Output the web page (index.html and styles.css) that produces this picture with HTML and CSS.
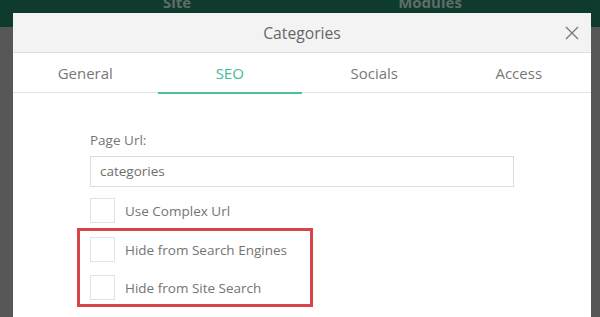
FILE: index.html
```html
<!DOCTYPE html>
<html lang="en">
<head>
<meta charset="utf-8">
<title>Categories</title>
<link rel="stylesheet" href="styles.css">
</head>
<body>
<div class="topbar">
  <nav class="nav">
    <span class="nav-item">Site</span>
    <span class="nav-item">Modules</span>
  </nav>
</div>
<div class="modal">
  <div class="modal-header">
    <span class="modal-title">Categories</span>
    <button class="close" aria-label="Close">
      <svg width="14" height="14" viewBox="0 0 14 14"><path d="M1 1L13 13M13 1L1 13" stroke="#7a7a7a" stroke-width="1.4" fill="none"/></svg>
    </button>
  </div>
  <div class="tabs">
    <div class="tab">General</div>
    <div class="tab active">SEO</div>
    <div class="tab">Socials</div>
    <div class="tab">Access</div>
  </div>
  <div class="modal-body">
    <label class="field-label">Page Url:</label>
    <div class="input">categories</div>
    <div class="check-row first">
      <span class="checkbox"></span>
      <span class="check-label">Use Complex Url</span>
    </div>
    <div class="highlight">
      <div class="check-row">
        <span class="checkbox"></span>
        <span class="check-label">Hide from Search Engines</span>
      </div>
      <div class="check-row second">
        <span class="checkbox"></span>
        <span class="check-label">Hide from Site Search</span>
      </div>
    </div>
  </div>
</div>
</body>
</html>
```

FILE: styles.css
```css
html, body {
  margin: 0;
  padding: 0;
  height: 100%;
}
body {
  background: #575757;
  font-family: "Open Sans", "Liberation Sans", sans-serif;
  overflow: hidden;
  position: relative;
}
.topbar {
  height: 27px;
  background: #0f3a2e;
  overflow: hidden;
}
.nav {
  display: flex;
  padding-left: 117px;
  gap: 133px;
}
.nav-item {
  width: 120px;
  text-align: center;
  font-size: 15px;
  font-weight: 700;
  line-height: 16px;
  margin-top: -6px;
  color: #5f6d69;
}
.modal {
  position: absolute;
  left: 13px;
  top: 13px;
  width: 578px;
  bottom: 0;
  background: #fff;
}
.modal-header {
  height: 38px;
  background: #f3f3f3;
  border-bottom: 1px solid #dedede;
  display: flex;
  align-items: center;
  justify-content: center;
  position: relative;
  padding-top: 1px;
}
.modal-title {
  font-size: 15.7px;
  color: #666;
  line-height: 20px;
}
.close {
  position: absolute;
  right: 12px;
  top: 13px;
  width: 14px;
  height: 14px;
  padding: 0;
  border: 0;
  background: none;
  display: block;
}
.close svg {
  display: block;
}
.tabs {
  display: flex;
  height: 39px;
  border-bottom: 1px solid #e2e2e2;
}
.tab {
  flex: 1;
  display: flex;
  align-items: center;
  justify-content: center;
  font-size: 15px;
  color: #787878;
  position: relative;
}
.tab.active {
  color: #45b89a;
}
.tab.active::after {
  content: "";
  position: absolute;
  left: 0;
  right: 0;
  bottom: -2px;
  height: 2px;
  background: #4cbfa0;
}
.modal-body {
  padding: 38px 0 0 77px;
}
.field-label {
  display: block;
  font-size: 13.5px;
  line-height: 18px;
  color: #747474;
  margin-bottom: 7px;
}
.input {
  width: 424px;
  height: 31px;
  box-sizing: border-box;
  border: 1px solid #dcdcdc;
  padding: 0 9px;
  font-size: 13.5px;
  line-height: 29px;
  color: #6e6e6e;
}
.check-row {
  display: flex;
  align-items: center;
  gap: 10px;
  height: 25px;
}
.check-row.first {
  margin-top: 11px;
}
.check-row.second {
  margin-top: 13px;
}
.checkbox {
  width: 25px;
  height: 25px;
  box-sizing: border-box;
  border: 1px solid #e2e2e2;
  background: #fff;
  flex: none;
}
.check-label {
  font-size: 13.5px;
  line-height: 18px;
  color: #747474;
}
.highlight {
  width: 236px;
  box-sizing: border-box;
  margin: 5px 0 0 -13px;
  border: 3px solid #d9434a;
  padding: 6px 10px 4px 10px;
}
```
